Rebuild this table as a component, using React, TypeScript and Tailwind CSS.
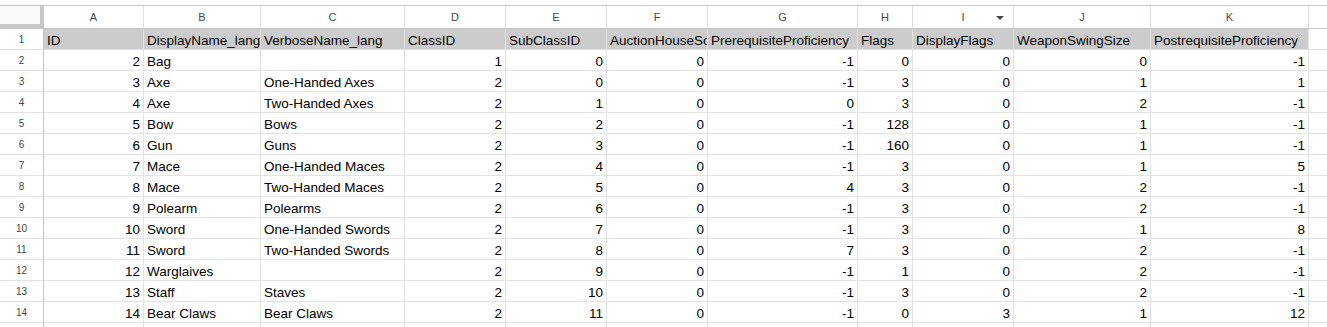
const cols = [
  { key: "A", w: "w-[100px]" },
  { key: "B", w: "w-[117px]" },
  { key: "C", w: "w-[144px]" },
  { key: "D", w: "w-[101px]" },
  { key: "E", w: "w-[101px]" },
  { key: "F", w: "w-[101px]" },
  { key: "G", w: "w-[150px]" },
  { key: "H", w: "w-[55px]" },
  { key: "I", w: "w-[101px]" },
  { key: "J", w: "w-[137px]" },
  { key: "K", w: "w-[158px]" },
  { key: "L", w: "w-[120px]" },
];

const head = [
  "ID",
  "DisplayName_lang",
  "VerboseName_lang",
  "ClassID",
  "SubClassID",
  "AuctionHouseSortOrder",
  "PrerequisiteProficiency",
  "Flags",
  "DisplayFlags",
  "WeaponSwingSize",
  "PostrequisiteProficiency",
];

type Row = (string | number)[];

const rows: Row[] = [
  [2, "Bag", "", 1, 0, 0, -1, 0, 0, 0, -1],
  [3, "Axe", "One-Handed Axes", 2, 0, 0, -1, 3, 0, 1, 1],
  [4, "Axe", "Two-Handed Axes", 2, 1, 0, 0, 3, 0, 2, -1],
  [5, "Bow", "Bows", 2, 2, 0, -1, 128, 0, 1, -1],
  [6, "Gun", "Guns", 2, 3, 0, -1, 160, 0, 1, -1],
  [7, "Mace", "One-Handed Maces", 2, 4, 0, -1, 3, 0, 1, 5],
  [8, "Mace", "Two-Handed Maces", 2, 5, 0, 4, 3, 0, 2, -1],
  [9, "Polearm", "Polearms", 2, 6, 0, -1, 3, 0, 2, -1],
  [10, "Sword", "One-Handed Swords", 2, 7, 0, -1, 3, 0, 1, 8],
  [11, "Sword", "Two-Handed Swords", 2, 8, 0, 7, 3, 0, 2, -1],
  [12, "Warglaives", "", 2, 9, 0, -1, 1, 0, 2, -1],
  [13, "Staff", "Staves", 2, 10, 0, -1, 3, 0, 2, -1],
  [14, "Bear Claws", "Bear Claws", 2, 11, 0, -1, 0, 3, 1, 12],
];

function RowNum({ n }: { n: number }) {
  return (
    <div className="w-[44px] shrink-0 flex items-center justify-center border-r border-b border-r-[#c4c7c5] border-b-[#e2e3e3] text-[10px] text-[#444746]">
      {n}
    </div>
  );
}

export default function App() {
  return (
    <div className="w-[1327px] h-[327px] overflow-hidden bg-white font-['Liberation_Sans',Arial,sans-serif] text-black">
      <div className="h-[5px]" />
      {/* column letters */}
      <div className="flex h-[24px] border-t border-b border-[#c4c7c5]">
        <div className="w-[44px] shrink-0 bg-[#f8f9fa] border-r-4 border-b-4 border-[#c4c7c5]" />
        {cols.map((c) => (
          <div
            key={c.key}
            className={`${c.w} shrink-0 relative flex items-center justify-center border-r border-[#e1e3e1] text-[11px] text-[#444746]`}
          >
            {c.key}
            {c.key === "I" && (
              <svg
                className="absolute right-[9px] top-[10px]"
                width="8"
                height="4"
                viewBox="0 0 8 4"
                aria-hidden
              >
                <path d="M0 0h8L4 4z" fill="#444746" />
              </svg>
            )}
          </div>
        ))}
      </div>

      {/* row 1 */}
      <div className="flex h-[21px]">
        <RowNum n={1} />
        {cols.map((c, i) => (
          <div
            key={c.key}
            className={`${c.w} shrink-0 flex items-end overflow-hidden whitespace-nowrap border-r border-b border-[#e2e3e3] px-[3px] text-[13.5px] leading-[16px] ${
              i < head.length ? "bg-[#cccccc]" : ""
            }`}
          >
            {head[i] ?? ""}
          </div>
        ))}
      </div>

      {rows.map((r, ri) => (
        <div key={ri} className="flex h-[21px]">
          <RowNum n={ri + 2} />
          {cols.map((c, i) => {
            const v = r[i];
            const num = typeof v === "number";
            return (
              <div
                key={c.key}
                className={`${c.w} shrink-0 flex items-end overflow-hidden whitespace-nowrap border-r border-b border-[#e2e3e3] px-[3px] text-[13.5px] leading-[16px] ${
                  num ? "justify-end" : "justify-start"
                }`}
              >
                {v ?? ""}
              </div>
            );
          })}
        </div>
      ))}

      <div className="flex h-[21px]">
        <RowNum n={15} />
        {cols.map((c) => (
          <div key={c.key} className={`${c.w} shrink-0 border-r border-b border-[#e2e3e3]`} />
        ))}
      </div>
    </div>
  );
}
